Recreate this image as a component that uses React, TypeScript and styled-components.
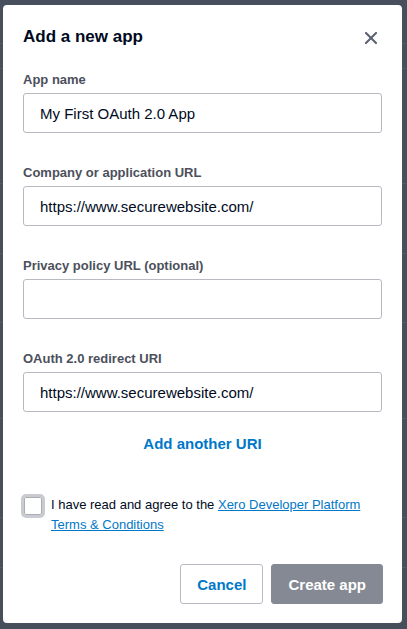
import React, { useState } from 'react';
import styled, { createGlobalStyle } from 'styled-components';

const GlobalStyle = createGlobalStyle`
    html, body {
        margin: 0;
        padding: 0;
        height: 100%;
    }
    body {
        font-family: Arial, "Liberation Sans", sans-serif;
        background: #474f5c;
    }
    * {
        box-sizing: border-box;
    }
`;

// faint rows of the page sitting behind the overlay
const backdropLines = [43, 68, 183, 253, 322, 418, 517, 567]
    .map(y => `linear-gradient(to bottom, transparent ${y}px, #535b68 ${y}px, #535b68 ${y + 1}px, transparent ${y + 1}px)`)
    .join(', ');

const Backdrop = styled.div`
    width: 407px;
    height: 629px;
    padding: 5px 5px 6px 3px;
    background-color: #474f5c;
    background-image: ${backdropLines};
`;

const Modal = styled.div`
    width: 399px;
    height: 618px;
    background: #fff;
    border-radius: 4px;
    padding: 20px 20px 19px 20px;
    display: flex;
    flex-direction: column;
`;

const Header = styled.div`
    display: flex;
    align-items: center;
    justify-content: space-between;
    height: 24px;
    margin-bottom: 22px;
`;

const Title = styled.h2`
    margin: 0;
    font-size: 17px;
    line-height: 24px;
    font-weight: 700;
    color: #000a1e;
`;

const CloseButton = styled.button`
    border: none;
    background: none;
    padding: 0;
    width: 24px;
    height: 24px;
    display: flex;
    align-items: center;
    justify-content: center;
    cursor: pointer;
    margin-right: -1px;
    margin-top: 1px;
`;

const Field = styled.div<{ $last?: boolean }>`
    display: flex;
    flex-direction: column;
    gap: 4px;
    margin-bottom: ${p => (p.$last ? '22px' : '31px')};
`;

const Label = styled.label`
    font-size: 13px;
    line-height: 18px;
    font-weight: 700;
    color: #4c505c;
`;

const Input = styled.input`
    width: 100%;
    height: 40px;
    border: 1px solid #b7bac1;
    border-radius: 3px;
    padding: 0 16px;
    font-family: Arial, "Liberation Sans", sans-serif;
    font-size: 15px;
    color: #000a1e;
    outline: none;
`;

const LinkButton = styled.button`
    align-self: center;
    border: none;
    background: none;
    padding: 0;
    font-family: Arial, "Liberation Sans", sans-serif;
    font-size: 15px;
    line-height: 20px;
    font-weight: 700;
    color: #0078c8;
    cursor: pointer;
`;

const AgreeRow = styled.div`
    display: flex;
    align-items: flex-start;
    gap: 6px;
    margin: 40px 0 0 -2px;
`;

const Checkbox = styled.span<{ $checked: boolean }>`
    flex: none;
    width: 24px;
    height: 24px;
    border: 3px solid #c9cbd0;
    border-radius: 5px;
    background: ${p => (p.$checked ? '#0078c8' : '#fff')};
    box-shadow: inset 0 0 0 1px #a9acb3;
    cursor: pointer;
`;

const AgreeText = styled.p`
    margin: 0;
    font-size: 13px;
    line-height: 20px;
    color: #000a1e;
    padding-top: 1px;

    a {
        color: #0078c8;
        text-decoration: underline;
    }
`;

const Footer = styled.div`
    margin-top: auto;
    display: flex;
    justify-content: flex-end;
    gap: 8px;
    margin-right: -1px;
`;

const Button = styled.button<{ $primary?: boolean }>`
    height: 40px;
    padding: 0 16px;
    border-radius: 3px;
    font-family: Arial, "Liberation Sans", sans-serif;
    font-size: 15px;
    font-weight: 700;
    cursor: pointer;
    border: 1px solid ${p => (p.$primary ? '#858994' : '#b7bac1')};
    background: ${p => (p.$primary ? '#858994' : '#fff')};
    color: ${p => (p.$primary ? '#fff' : '#0078c8')};
`;

const CloseIcon = () => (
    <svg width="12" height="12" viewBox="0 0 12 12">
        <path d="M1 1 L11 11 M11 1 L1 11" stroke="#5b6270" strokeWidth="2.1" strokeLinecap="square" />
    </svg>
);

const fields = [
    { label: 'App name', value: 'My First OAuth 2.0 App' },
    { label: 'Company or application URL', value: 'https://www.securewebsite.com/' },
    { label: 'Privacy policy URL (optional)', value: '' },
    { label: 'OAuth 2.0 redirect URI', value: 'https://www.securewebsite.com/' },
];

const App = () => {
    const [values, setValues] = useState(fields.map(f => f.value));
    const [agreed, setAgreed] = useState(false);

    return (
        <>
            <GlobalStyle />
            <Backdrop>
                <Modal>
                    <Header>
                        <Title>Add a new app</Title>
                        <CloseButton aria-label="Close">
                            <CloseIcon />
                        </CloseButton>
                    </Header>
                    {fields.map((field, index) => (
                        <Field key={field.label} $last={index === fields.length - 1}>
                            <Label>{field.label}</Label>
                            <Input
                                value={values[index]}
                                onChange={e => {
                                    const next = [...values];
                                    next[index] = e.target.value;
                                    setValues(next);
                                }}
                            />
                        </Field>
                    ))}
                    <LinkButton>Add another URI</LinkButton>
                    <AgreeRow>
                        <Checkbox $checked={agreed} onClick={() => setAgreed(!agreed)} />
                        <AgreeText>
                            I have read and agree to the <a href="#">Xero Developer Platform Terms &amp; Conditions</a>
                        </AgreeText>
                    </AgreeRow>
                    <Footer>
                        <Button>Cancel</Button>
                        <Button $primary>Create app</Button>
                    </Footer>
                </Modal>
            </Backdrop>
        </>
    );
};

export default App;
